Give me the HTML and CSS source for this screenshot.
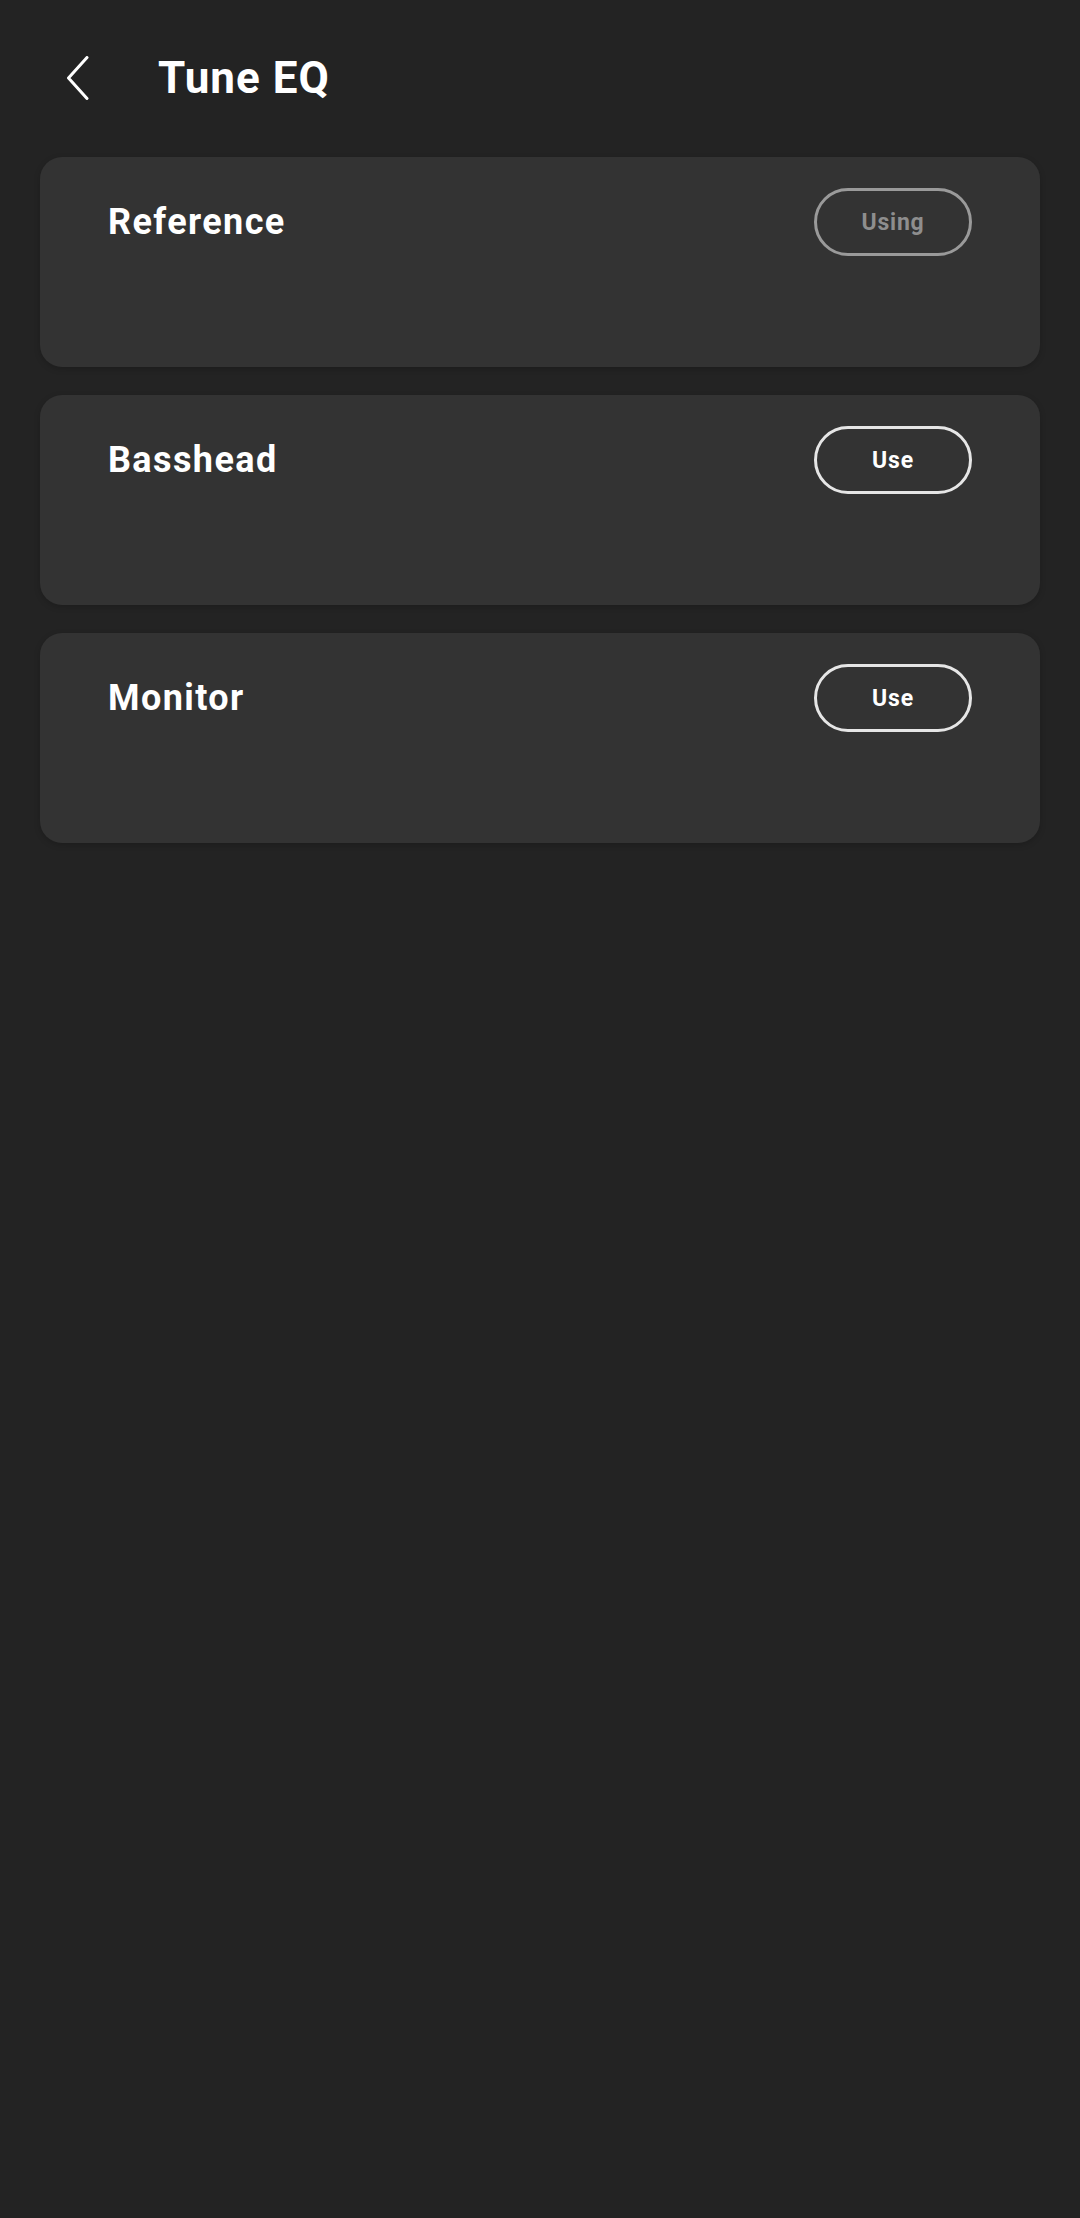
FILE: index.html
```html
<!DOCTYPE html>
<html>
<head>
<meta charset="utf-8">
<link rel="stylesheet" href="styles.css">
</head>
<body>
<div class="app">
  <header class="topbar">
    <button class="back" aria-label="Back">
      <svg width="24" height="44" viewBox="0 0 24 44"><path d="M21 1.5 L2.5 22 L21 42.5" fill="none" stroke="#ffffff" stroke-width="3" stroke-linecap="round" stroke-linejoin="round"/></svg>
    </button>
    <h1 class="title">Tune EQ</h1>
  </header>
  <main class="list">
    <section class="card">
      <div class="card-head">
        <span class="card-name">Reference</span>
        <span class="pill pill-using">Using</span>
      </div>
    </section>
    <section class="card">
      <div class="card-head">
        <span class="card-name">Basshead</span>
        <span class="pill">Use</span>
      </div>
    </section>
    <section class="card">
      <div class="card-head">
        <span class="card-name">Monitor</span>
        <span class="pill">Use</span>
      </div>
    </section>
  </main>
</div>
</body>
</html>
```
FILE: styles.css
```css
html, body {
  margin: 0;
  padding: 0;
  background: #232323;
}
body {
  font-family: Roboto, "Liberation Sans", sans-serif;
  color: #ffffff;
  width: 1080px;
  min-height: 2218px;
}
.app {
  display: flex;
  flex-direction: column;
}
.topbar {
  display: flex;
  align-items: center;
  height: 157px;
  padding-left: 66px;
  box-sizing: border-box;
  padding-bottom: 2px;
}
.back {
  background: none;
  border: none;
  padding: 0;
  width: 24px;
  height: 44px;
  display: flex;
}
.title {
  margin: 0 0 0 68px;
  font-size: 44px;
  font-weight: 700;
  letter-spacing: 1px;
  line-height: 1;
}
.list {
  display: flex;
  flex-direction: column;
  gap: 28px;
  padding: 0 40px;
}
.card {
  background: #333333;
  border-radius: 22px;
  height: 210px;
  box-sizing: border-box;
  padding: 31px 68px 0 68px;
  box-shadow: 0 2px 6px rgba(0,0,0,0.18);
}
.card-head {
  display: flex;
  align-items: center;
  justify-content: space-between;
}
.card-name {
  font-size: 36px;
  font-weight: 700;
  letter-spacing: 1.4px;
}
.pill {
  width: 158px;
  height: 68px;
  box-sizing: border-box;
  border: 3px solid #e6e6e6;
  border-radius: 34px;
  display: flex;
  align-items: center;
  justify-content: center;
  font-size: 23px;
  font-weight: 700;
  letter-spacing: 0.8px;
  color: #ffffff;
}
.pill-using {
  border-color: #9a9a9a;
  color: #8e8e8e;
}
```
